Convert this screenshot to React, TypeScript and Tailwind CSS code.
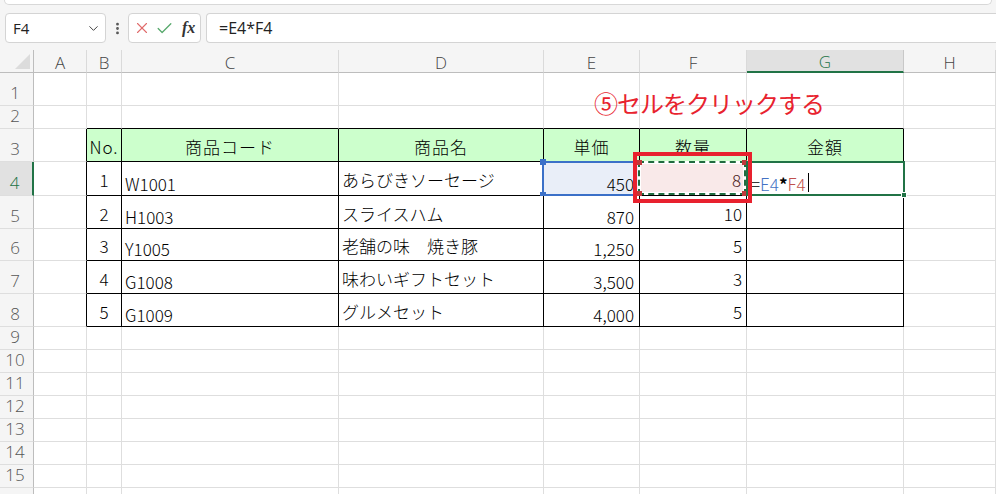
import { Check, ChevronDown, EllipsisVertical, X } from "lucide-react";
import type { ReactNode } from "react";

const COLS =
  "grid grid-cols-[34px_53px_35px_217px_205px_96px_107px_157px_1fr]";
const LETTERS = ["A", "B", "C", "D", "E", "F", "G", "H"];

// sheet rows 1..16 and their heights
const ROW_H: Record<number, string> = {
  1: "h-[33px]",
  2: "h-[23px]",
  3: "h-[33px]",
  4: "h-[34px]",
  5: "h-[33px]",
  6: "h-[32px]",
  7: "h-[33px]",
  8: "h-[33px]",
};

const HEADERS = ["No.", "商品コード", "商品名", "単価", "数量", "金額"];

const ITEMS = [
  ["1", "W1001", "あらびきソーセージ", "450", "8"],
  ["2", "H1003", "スライスハム", "870", "10"],
  ["3", "Y1005", "老舗の味　焼き豚", "1,250", "5"],
  ["4", "G1008", "味わいギフトセット", "3,500", "3"],
  ["5", "G1009", "グルメセット", "4,000", "5"],
];

const FormulaBar = () => (
  <div className="flex items-start h-[45px] pt-[8px] pl-[5px]">
    <div className="w-[101px] h-[30px] bg-white border border-[#d4d4d4] rounded-[4px] flex items-center justify-between pl-[7px] pr-[4px]">
      <span className="text-[15px] text-[#222] font-['Open_Sans',sans-serif] leading-none">
        F4
      </span>
      <ChevronDown size={15} strokeWidth={1.6} className="text-[#444]" />
    </div>
    <div className="w-[22px] h-[30px] flex items-center justify-center">
      <EllipsisVertical size={15} strokeWidth={2.5} className="text-[#555]" />
    </div>
    <div className="w-[73px] h-[30px] bg-white border border-[#d4d4d4] rounded-[4px] flex items-center pl-[4px]">
      <X size={18} strokeWidth={1.5} className="text-[#e06b6b]" />
      <Check size={19} strokeWidth={1.6} className="text-[#56a86b] ml-[4px]" />
      <span className="ml-[8px] font-['Liberation_Serif',serif] italic font-bold text-[16px] text-[#333] leading-none">
        fx
      </span>
    </div>
    <div className="ml-[5px] flex-1 h-[30px] bg-white border-y border-l border-[#d4d4d4] rounded-l-[4px] flex items-center pl-[12px]">
      <span className="text-[16px] text-[#222] font-['Open_Sans',sans-serif] leading-none">
        =E4*F4
      </span>
    </div>
  </div>
);

const ColumnHeaders = () => (
  <div className={`${COLS} h-[23px]`}>
    <div className="relative border-r border-b border-[#bdbdbd]">
      <svg
        className="absolute right-[3px] bottom-[3px]"
        width="15"
        height="15"
        viewBox="0 0 15 15"
      >
        <polygon points="15,0 15,15 0,15" fill="#dcdcdc" />
      </svg>
    </div>
    {LETTERS.map((l) => {
      const active = l === "G";
      return (
        <div
          key={l}
          className={`flex items-center justify-center pt-[2px] text-[17px] font-light font-['Open_Sans',sans-serif] leading-none ${
            active
              ? "bg-[#e1e1e1] text-[#217346] border-b-2 border-b-[#217346] border-r border-r-[#c8c8c8]"
              : "text-[#444] border-r border-r-[#dadada] border-b border-b-[#bdbdbd]"
          }`}
        >
          {l}
        </div>
      );
    })}
  </div>
);

interface ICellProps {
  row: number;
  col: number; // 1 = A ... 8 = H
  className?: string;
  children?: ReactNode;
}

const Cell = ({ row, col, className = "", children }: ICellProps) => {
  const inTable = row >= 3 && row <= 8 && col >= 2 && col <= 7;
  const rightBlack = inTable || (row >= 3 && row <= 8 && col === 1);
  const bottomBlack = inTable || (row === 2 && col >= 2 && col <= 7);
  return (
    <div
      className={`relative flex text-[17px] font-light leading-none text-black ${
        rightBlack ? "border-r border-r-black" : "border-r border-r-[#dedede]"
      } ${
        bottomBlack ? "border-b border-b-black" : "border-b border-b-[#dedede]"
      } ${row === 3 && inTable ? "bg-[#ccffcc]" : "bg-white"} ${className}`}
    >
      {children}
    </div>
  );
};

const RowHeader = ({ n }: { n: number }) => (
  <div
    className={`flex items-end justify-center pr-[3px] pb-[4px] text-[17px] font-light font-['Open_Sans',sans-serif] leading-none border-b border-b-[#dedede] ${
      n === 4
        ? "bg-[#e1e1e1] text-[#217346] border-r-2 border-r-[#217346]"
        : "bg-[#f5f5f5] text-[#555] border-r border-r-[#bdbdbd]"
    }`}
  >
    {n < 16 ? n : ""}
  </div>
);

const ItemCells = ({ row, item }: { row: number; item: string[] }) => {
  const [no, code, name, price, qty] = item;
  const first = row === 4;
  return (
    <>
      <Cell row={row} col={2} className="items-center justify-center pt-[2px]">
        {no}
      </Cell>
      <Cell row={row} col={3} className="items-end pl-[3px] pb-[3px]">
        {code}
      </Cell>
      <Cell row={row} col={4} className="items-center pl-[3px] pt-[2px]">
        {name}
      </Cell>
      <Cell
        row={row}
        col={5}
        className={`items-end justify-end pr-[5px] pb-[3px] ${first ? "bg-[#e9eef8]!" : ""}`}
      >
        {first && (
          <div className="absolute -left-[2px] -top-[1px] -right-[1px] -bottom-[1px] border-2 border-[#3b70c8]">
            <div className="absolute -left-[4px] -top-[4px] w-[6px] h-[6px] bg-[#3b70c8]" />
            <div className="absolute -left-[4px] -bottom-[4px] w-[6px] h-[6px] bg-[#3b70c8]" />
          </div>
        )}
        <span className="relative">{price}</span>
      </Cell>
      <Cell row={row} col={6} className="items-center justify-end pr-[4px] pt-[2px]">
        {first && (
          <>
            <div className="absolute -left-[2px] -top-[1px] right-0 bottom-0 border-2 border-dashed border-[#1f6b3f] bg-white">
              <div className="absolute inset-[1px] bg-[#f9e9e9]" />
              <div className="absolute -left-[3px] -top-[3px] w-[5px] h-[5px] bg-[#c0393b]" />
              <div className="absolute -right-[3px] -top-[3px] w-[5px] h-[5px] bg-[#c0393b]" />
              <div className="absolute -left-[3px] -bottom-[3px] w-[5px] h-[5px] bg-[#c0393b]" />
              <div className="absolute -right-[3px] -bottom-[3px] w-[5px] h-[5px] bg-[#c0393b]" />
            </div>
            <div className="absolute -left-[7px] -top-[10px] w-[119px] h-[51px] border-4 border-[#e8212e] z-20" />
          </>
        )}
        <span className={`relative ${first ? "text-[#4a1c1c] pr-[1px]" : ""}`}>{qty}</span>
      </Cell>
      <Cell row={row} col={7} className="items-end pl-[4px] pb-[3px]">
        {first && (
          <>
            <div className="absolute -left-[1px] -top-[1px] -right-[2px] -bottom-[1px] border-2 border-[#217346] z-10">
              <div className="absolute -right-[4px] -bottom-[4px] w-[6px] h-[6px] bg-[#217346] border border-white" />
            </div>
            <span className="relative flex items-end">
              <span>=</span>
              <span className="text-[#4472c4]">E4</span>
              <span className="font-bold">*</span>
              <span className="text-[#c0504d]">F4</span>
              <span className="ml-[2px] w-px h-[19px] bg-black" />
            </span>
          </>
        )}
      </Cell>
    </>
  );
};

const SheetRow = ({ n }: { n: number }) => {
  const h = ROW_H[n] ?? "h-[23px]";
  let middle: ReactNode;
  if (n === 3) {
    middle = HEADERS.map((t, i) => (
      <Cell
        key={t}
        row={n}
        col={i + 2}
        className="items-center justify-center pt-[3px] tracking-[1px]"
      >
        {t}
      </Cell>
    ));
  } else if (n >= 4 && n <= 8) {
    middle = <ItemCells row={n} item={ITEMS[n - 4]} />;
  } else {
    middle = [2, 3, 4, 5, 6, 7].map((c) => <Cell key={c} row={n} col={c} />);
  }
  return (
    <div className={`${COLS} ${h}`}>
      <RowHeader n={n} />
      <Cell row={n} col={1} />
      {middle}
      <Cell row={n} col={8} />
    </div>
  );
};

export default function App() {
  const rows = Array.from({ length: 16 }, (_, i) => i + 1);
  return (
    <div className="relative w-[996px] h-[494px] overflow-hidden bg-[#f5f5f5] font-['Noto_Sans_CJK_JP',sans-serif]">
      <div className="h-[5px] mx-[4px] bg-white rounded-b-[6px] border-b border-x border-[#d8d8d8]" />
      <FormulaBar />
      <ColumnHeaders />
      {rows.map((n) => (
        <SheetRow key={n} n={n} />
      ))}
      <div className="absolute left-[594px] top-[91px] text-[24px] tracking-[-1px] leading-none text-[#e8232e] z-30">
        ⑤セルをクリックする
      </div>
    </div>
  );
}
